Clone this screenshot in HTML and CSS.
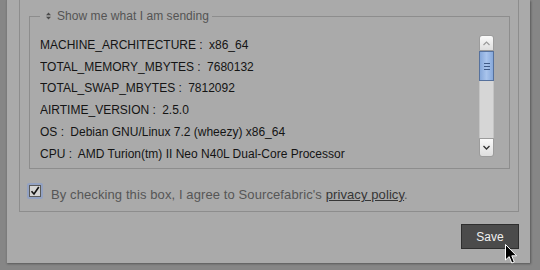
FILE: index.html
```html
<!DOCTYPE html>
<html>
<head>
<meta charset="utf-8">
<link rel="stylesheet" href="styles.css">
</head>
<body>
<div class="panel">
  <div class="box">
    <fieldset class="info">
      <legend><svg class="sort" width="5" height="8" viewBox="0 0 5 8"><path d="M2.5 0.5 L5 3.2 L0 3.2 Z M0 4.8 L5 4.8 L2.5 7.5 Z" fill="#4a4a4a"/></svg><span class="legend-text">Show me what I am sending</span></legend>
      <div class="scroll">
        <ul class="data">
          <li><span class="k">MACHINE_ARCHITECTURE :</span> x86_64</li>
          <li><span class="k">TOTAL_MEMORY_MBYTES :</span> 7680132</li>
          <li><span class="k">TOTAL_SWAP_MBYTES :</span> 7812092</li>
          <li><span class="k">AIRTIME_VERSION :</span> 2.5.0</li>
          <li><span class="k">OS :</span> Debian GNU/Linux 7.2 (wheezy) x86_64</li>
          <li><span class="k">CPU :</span> AMD Turion(tm) II Neo N40L Dual-Core Processor</li>
        </ul>
        <div class="sb">
          <div class="sb-up"><svg width="7" height="5" viewBox="0 0 7 5"><path d="M0.5 4 L3.5 1 L6.5 4" fill="none" stroke="#9a9a9a" stroke-width="1.2"/></svg></div>
          <div class="sb-thumb"><i></i><i></i><i></i></div>
          <div class="sb-track"></div>
          <div class="sb-down"><svg width="7" height="5" viewBox="0 0 7 5"><path d="M0.5 1 L3.5 4 L6.5 1" fill="none" stroke="#333" stroke-width="1.3"/></svg></div>
        </div>
      </div>
    </fieldset>
    <label class="agree">
      <span class="check"><span class="mark"><svg width="10" height="10" viewBox="0 0 10 10"><path d="M1.5 5.2 L4 8 L8.8 1" fill="none" stroke="#111" stroke-width="1.6"/></svg></span></span>
      <span class="agree-text">By checking this box, I agree to Sourcefabric's <a class="link">privacy policy</a>.</span>
    </label>
  </div>
  <div class="actions">
    <button class="save">Save</button>
  </div>
</div>
<svg class="cursor" width="13" height="21" viewBox="0 0 13 21"><path d="M0.5 0.5 L0.5 16 L4.2 12.6 L6.8 19 L9.3 18 L6.8 11.8 L11.6 11.8 Z" fill="#000" stroke="#fff" stroke-width="1"/></svg>
</body>
</html>
```
FILE: styles.css
```css
html, body {
  margin: 0;
  padding: 0;
}
body {
  width: 540px;
  height: 270px;
  overflow: hidden;
  background: #868686;
  position: relative;
  font-family: "Liberation Sans", Arial, sans-serif;
  font-size: 12px;
}
.panel {
  box-sizing: border-box;
  margin-left: 6px;
  width: 524px;
  height: 263px;
  background: #aaaaaa;
  border-left: 1px solid #7c7c7c;
  box-shadow: 1px 1px 2px rgba(0,0,0,0.35);
  padding: 0 11px 0 12px;
}
.box {
  border: 1px solid #8d8d8d;
  border-top: 0;
  padding: 8px 0 8px 0;
}
.info {
  margin: 0 8px 0 9px;
  padding: 11px 15px 3px 10px;
  border: 1px solid #8d8d8d;
  min-width: 0;
}
.info legend {
  padding: 0 3px 0 6px;
  line-height: 16px;
  color: #545454;
  display: flex;
  align-items: center;
}
.sort {
  margin-right: 6px;
}
.legend-text {
  letter-spacing: 0.05px;
}
.scroll {
  display: flex;
  align-items: flex-start;
}
.data {
  list-style: none;
  margin: 0;
  padding: 0;
  flex: 1;
  height: 130px;
  overflow: hidden;
  line-height: 21.7px;
  color: #141414;
  white-space: nowrap;
}
.k {
  margin-right: 3px;
}
.sb {
  width: 15px;
  height: 122px;
  display: flex;
  flex-direction: column;
}
.sb-up, .sb-down {
  box-sizing: border-box;
  height: 16px;
  border: 1px solid #9c9c9c;
  background: linear-gradient(#fafafa, #dedede);
  display: flex;
  align-items: center;
  justify-content: center;
}
.sb-up {
  border-radius: 3px 3px 0 0;
}
.sb-down {
  height: 19px;
  border-radius: 0 0 3px 3px;
}
.sb-thumb {
  box-sizing: border-box;
  height: 30px;
  border: 1px solid #56719c;
  background: linear-gradient(90deg, #86a8da, #a9c4ec 50%, #86a8da);
  display: flex;
  flex-direction: column;
  align-items: center;
  justify-content: center;
  gap: 2px;
}
.sb-thumb i {
  display: block;
  width: 6px;
  height: 1px;
  background: #3f5a86;
}
.sb-track {
  flex: 1;
  background: #d6d6d6;
  border-left: 1px solid #c4c4c4;
  border-right: 1px solid #c4c4c4;
}
.agree {
  display: flex;
  align-items: flex-start;
  margin: 14px 0 0 7px;
}
.check {
  box-sizing: border-box;
  width: 16px;
  height: 16px;
  border: 2px solid #93a2c2;
  border-radius: 2px;
  background: #c9c9c9;
  display: flex;
}
.mark {
  box-sizing: border-box;
  width: 12px;
  height: 12px;
  border: 1px solid #5a5a5a;
  background: #d4d4d4;
  display: flex;
  align-items: center;
  justify-content: center;
}
.agree-text {
  margin-left: 8px;
  padding-top: 4px;
  line-height: 16px;
  font-size: 13px;
  letter-spacing: 0.1px;
  color: #565656;
}
.link {
  color: #363636;
  text-decoration: underline;
}
.actions {
  display: flex;
  justify-content: flex-end;
  margin-top: 12px;
}
.save {
  box-sizing: border-box;
  width: 58px;
  height: 25px;
  margin: 0;
  background: #4b4b4b;
  border: 1px solid #2e2e2e;
  color: #f0f0f0;
  font-family: "Liberation Sans", Arial, sans-serif;
  font-size: 12px;
  padding: 0;
}
.cursor {
  position: absolute;
  left: 505px;
  top: 244px;
}
```
